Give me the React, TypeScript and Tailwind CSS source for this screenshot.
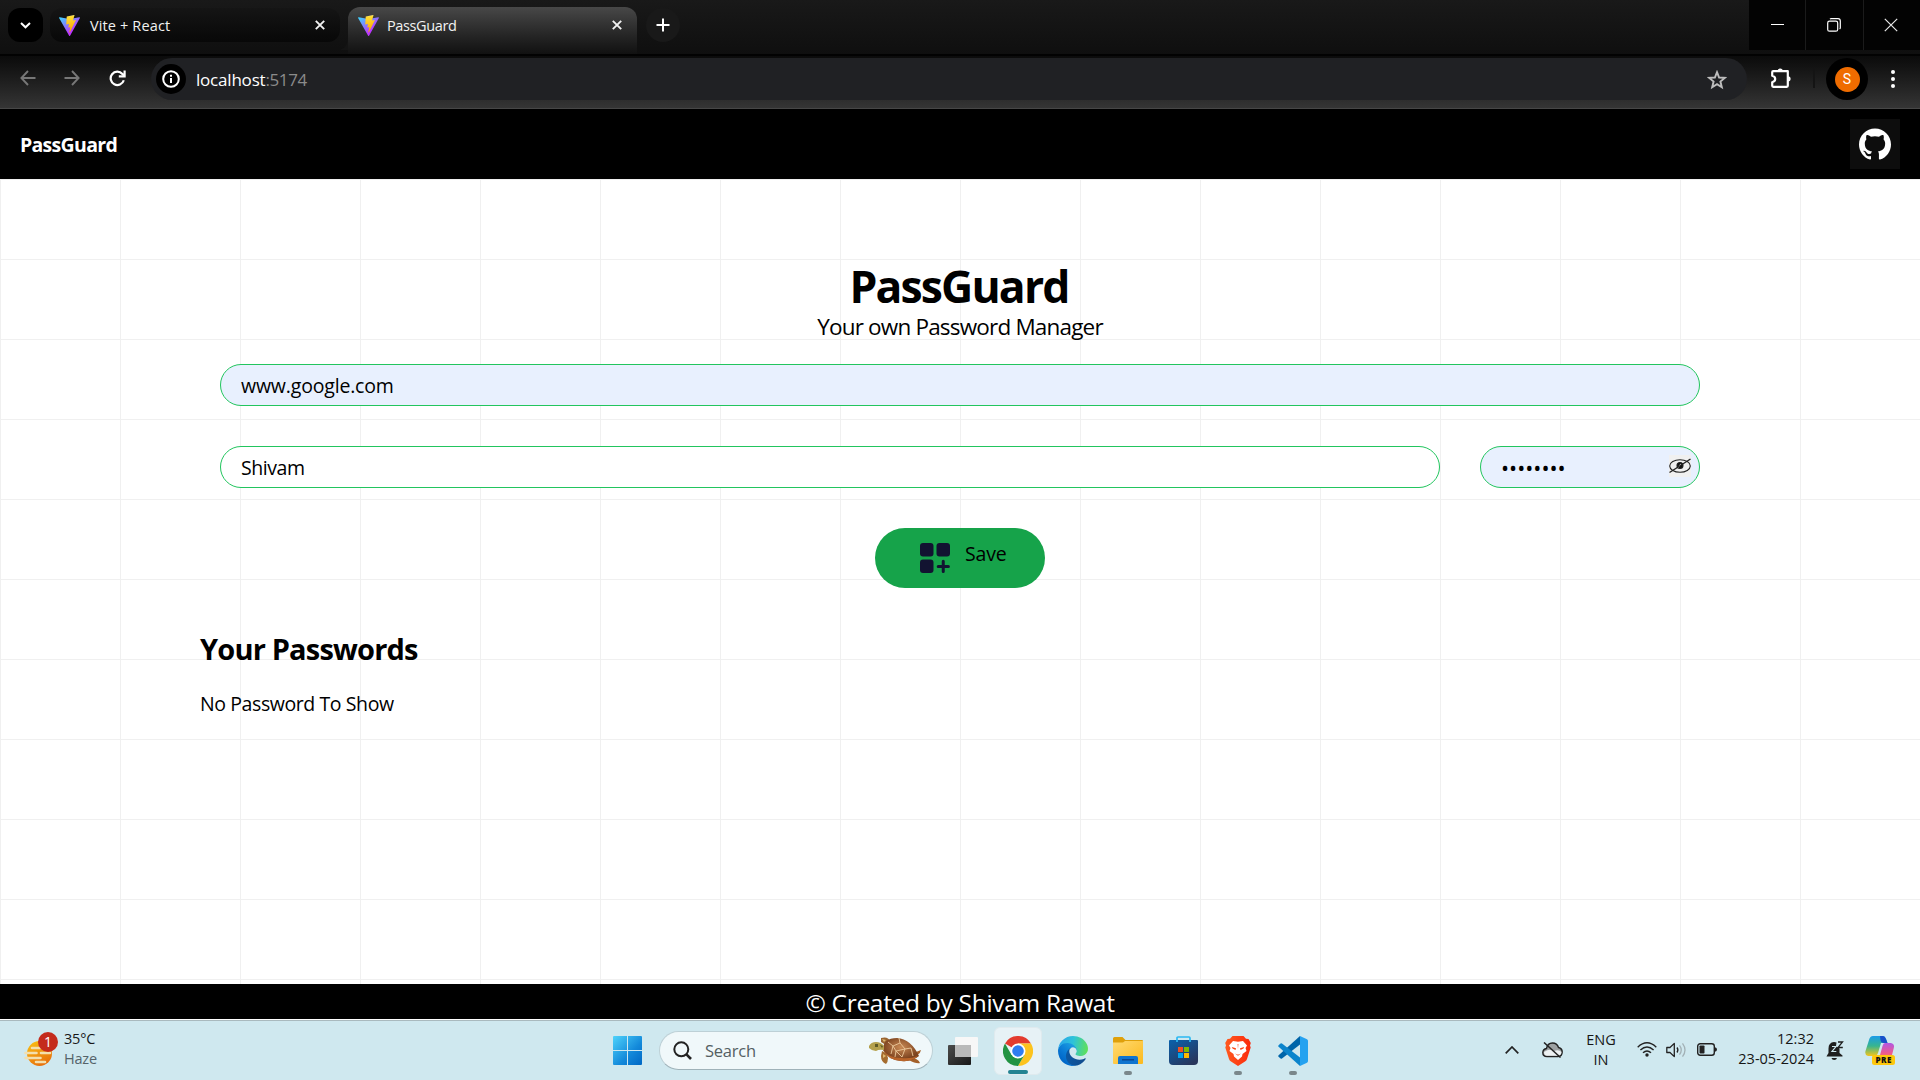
import React from "react";
import { SiGithub } from "react-icons/si";

function ViteLogo() {
  return (
    <svg width="21" height="21" viewBox="0 0 256 257" className="shrink-0">
      <defs>
        <linearGradient id="va" x1="-.8%" x2="57.6%" y1="7.7%" y2="78.4%">
          <stop offset="0%" stopColor="#41D1FF" />
          <stop offset="100%" stopColor="#BD34FE" />
        </linearGradient>
        <linearGradient id="vb" x1="43.4%" x2="50.3%" y1="2.2%" y2="89%">
          <stop offset="0%" stopColor="#FFEA83" />
          <stop offset="8.3%" stopColor="#FFDD35" />
          <stop offset="100%" stopColor="#FFA800" />
        </linearGradient>
      </defs>
      <path fill="url(#va)" d="M255.153 37.938L134.897 252.976c-2.483 4.44-8.862 4.466-11.382.048L.875 37.958c-2.746-4.814 1.371-10.646 6.827-9.67l120.385 21.517a6.537 6.537 0 0 0 2.322-.004l117.867-21.483c5.438-.991 9.574 4.796 6.877 9.62Z" />
      <path fill="url(#vb)" d="M185.432.063L96.44 17.501a3.268 3.268 0 0 0-2.634 3.014l-5.474 92.456a3.268 3.268 0 0 0 3.997 3.378l24.777-5.718c2.318-.535 4.413 1.507 3.936 3.838l-7.361 36.047c-.495 2.426 1.782 4.5 4.151 3.78l15.304-4.649c2.372-.72 4.652 1.36 4.15 3.788l-11.698 56.621c-.732 3.542 3.979 5.473 5.943 2.437l1.313-2.028l72.516-144.72c1.215-2.423-.88-5.186-3.54-4.672l-25.505 4.922c-2.396.462-4.435-1.77-3.759-4.114l16.646-57.705c.677-2.35-1.37-4.583-3.769-4.113Z" />
    </svg>
  );
}

function CloseX() {
  return (
    <svg width="10" height="10" viewBox="0 0 10 10" stroke="#f1f1f1" strokeWidth="1.9" className="shrink-0">
      <path d="M.8.8l8.4 8.4M9.2.8L.8 9.2" />
    </svg>
  );
}

function TabStrip() {
  return (
    <div className="flex h-[54px] bg-linear-to-b from-[#191919] to-[#0f0f0f] pl-2">
      <div className="mt-2 flex h-[34px] w-[35px] items-center justify-center rounded-xl bg-black">
        <svg width="11" height="7" viewBox="0 0 11 7" fill="none" stroke="#fff" strokeWidth="2">
          <path d="M1 1l4.5 4.3L10 1" />
        </svg>
      </div>
      <div className="mt-2 ml-[7px] flex h-[34px] w-[290px] items-center rounded-xl bg-linear-to-b from-[#151515] to-[#080808] pr-[15px] pl-[9px]">
        <ViteLogo />
        <span className="mt-0.5 ml-[10px] text-[14.5px] tracking-[0.13px] text-[#f2f2f2]">Vite + React</span>
        <span className="ml-auto"><CloseX /></span>
      </div>
      <div className="flex w-2 items-end">
        <svg width="8" height="14" viewBox="0 0 8 14" className="mb-1"><path d="M8 0v14H0Q8 11 8 0Z" fill="#141414" /></svg>
      </div>
      <div className="mt-[7px] flex h-[47px] w-[289px] items-start rounded-t-xl bg-linear-to-b from-[#484848] to-[#111111] pt-2 pr-[15px] pl-[10px]">
        <ViteLogo />
        <span className="mt-px ml-[8px] text-[14.5px] leading-[20px] tracking-[-0.38px] text-[#f2f2f2]">PassGuard</span>
        <span className="mt-[5px] ml-auto"><CloseX /></span>
      </div>
      <div className="mt-2 ml-[9px] flex h-[34px] w-[34px] items-center justify-center rounded-full bg-[#191919]">
        <svg width="14" height="14" viewBox="0 0 14 14" stroke="#fff" strokeWidth="2"><path d="M7 .5v13M.5 7h13" /></svg>
      </div>
      <div className="ml-auto flex h-[50px] gap-px bg-[#1b1b1b]">
        <div className="flex w-[56px] items-center justify-center bg-[#030303]">
          <svg width="13" height="2" viewBox="0 0 13 2"><path d="M0 .5h13" stroke="#fff" strokeWidth="1" /></svg>
        </div>
        <div className="flex w-[57px] items-center justify-center bg-[#030303] pr-[2px]">
          <svg width="14" height="14" viewBox="0 0 14 14" fill="none" stroke="#fff">
            <rect x=".7" y="3.2" width="10" height="10" rx="1.8" strokeWidth="1.2" />
            <path d="M3 1.2Q3.5.6 4.2.6H11Q13.3.6 13.3 3V9.8Q13.3 10.6 12.6 11.1" strokeWidth="1.2" />
          </svg>
        </div>
        <div className="flex w-[56px] items-center justify-center bg-[#030303] pr-[2px]">
          <svg width="14" height="14" viewBox="0 0 14 14" stroke="#e8e8e8" strokeWidth="1.2"><path d="M.8.8l12.4 12.4M13.2.8L.8 13.2" /></svg>
        </div>
      </div>
    </div>
  );
}

function Toolbar() {
  return (
    <div className="flex h-[55px] items-center border-t-2 border-b border-t-[#020202] border-b-[#474747] bg-linear-to-b from-[#0b0b0b] to-[#353535] pl-[20px]">
      <div className="flex -translate-y-1 items-center">
        <svg width="16" height="16" viewBox="0 0 16 16" fill="none" stroke="#777" strokeWidth="1.9"><path d="M15.5 8H1.5M8 1L1.4 8L8 15" /></svg>
        <svg width="16" height="16" viewBox="0 0 16 16" fill="none" stroke="#777" strokeWidth="1.9" className="ml-[28px]"><path d="M.5 8h14M8 1l6.6 7L8 15" /></svg>
        <svg width="17" height="17" viewBox="0 0 17 17" fill="none" stroke="#fff" strokeWidth="2.2" className="ml-[29px]">
          <path d="M14.8 10.3A6.7 6.7 0 1 1 13.4 3.9L15.5 6" /><path d="M15.6.5V6.300H9.8" />
        </svg>
      </div>
      <div className="ml-[25px] flex h-[42px] w-[1596px] -translate-y-[3px] items-center rounded-full bg-[#202124] pr-[20px] pl-[5px]">
        <div className="flex size-[30px] items-center justify-center rounded-full bg-black">
          <svg width="18" height="18" viewBox="0 0 18 18" fill="none" stroke="#fff" strokeWidth="2">
            <circle cx="9" cy="9" r="7.8" /><path d="M9 8v5M9 4.700v2" />
          </svg>
        </div>
        <span className="mt-0.5 ml-[10px] text-[17px] tracking-[-0.2px] text-white">localhost</span>
        <span className="mt-0.5 text-[17px] tracking-[-0.4px] text-[#8b8b8b]">:5174</span>
        <svg width="20" height="20" viewBox="0 0 20 20" fill="none" stroke="#bdbdbd" strokeWidth="1.9" className="mt-px ml-auto">
          <path d="M10 2.2l2.1 5.3 5.7.4-4.4 3.7 1.4 5.6L10 14.1l-4.8 3.1 1.4-5.6L2.2 7.9l5.7-.4Z" />
        </svg>
      </div>
      <svg width="22" height="22" viewBox="0 0 22 22" className="ml-[23px] -translate-y-1">
        <path d="M3.2 4.2H17.8V18.8Q17.8 19.8 16.8 19.8H3.2Q2.2 19.8 2.2 18.8V15.2Q5.2 14.4 5.2 12Q5.2 9.6 2.2 8.8V5.2Q2.2 4.2 3.2 4.2Z" fill="none" stroke="#fff" strokeWidth="2.2" strokeLinejoin="round" />
        <path d="M7.6 4a2.6 2.6 0 0 1 5.2 0ZM18 9.2a2.6 2.6 0 0 1 0 5.2Z" fill="#fff" />
      </svg>
      <div className="ml-[21px] h-5 w-[2px] -translate-y-1 bg-[#141414]" />
      <div className="ml-[11px] flex size-[42px] -translate-y-[3px] items-center justify-center rounded-full bg-black">
        <div className="flex size-[25px] items-center justify-center rounded-full bg-[#ef6c00] font-['Roboto',sans-serif] text-[14px] leading-none text-white">S</div>
      </div>
      <svg width="4" height="18" viewBox="0 0 4 18" fill="#fff" className="ml-[23px] -translate-y-[3px]"><circle cx="2" cy="2" r="2" /><circle cx="2" cy="9" r="2" /><circle cx="2" cy="16" r="2" /></svg>
    </div>
  );
}

function Page() {
  return (
    <div className="flex h-[911px] flex-col text-black">
      <nav className="flex h-[70px] shrink-0 items-center justify-between bg-black px-5">
        <div className="mt-0.5 text-[19.5px] font-bold tracking-[-0.7px] text-white">PassGuard</div>
        <div className="flex size-[50px] items-center justify-center bg-[#0d0d0d]"><SiGithub size={32} color="#fff" /></div>
      </nav>
      <main className="flex-1 bg-[linear-gradient(to_right,#f0f0f0_1px,transparent_1px),linear-gradient(to_bottom,#f0f0f0_1px,transparent_1px)] bg-[size:120px_80px] px-[200px] pt-[82px]">
        <h1 className="h-[50px] pr-[2px] text-center text-[44.5px] leading-[50px] font-bold tracking-[-1.85px]">PassGuard</h1>
        <p className="h-[32px] text-center text-[22.5px] leading-[31px] tracking-[-0.81px]">Your own Password Manager</p>
        <div className="mx-5 mt-[21px] h-[42px] rounded-full border border-[#22c55e] bg-[#e8f0fe] px-[20px] text-[19.5px] leading-[42px] tracking-[-0.18px]">www.google.com</div>
        <div className="mx-5 mt-10 flex gap-10">
          <div className="h-[42px] flex-1 rounded-full border border-[#22c55e] bg-white px-[20px] text-[19.5px] leading-[42px] tracking-[-0.45px]">Shivam</div>
          <div className="flex h-[42px] w-[220px] items-center justify-between rounded-full border border-[#22c55e] bg-[#e8f0fe] pr-[8px] pl-[20px]">
            <span className="mt-0.5 text-[21.5px] leading-[40px]">••••••••</span>
            <svg width="22" height="22" viewBox="0 0 22 22" fill="none" stroke="#222" strokeWidth="1.1" className="-mt-0.5 bg-[#f0f0f0]">
              <ellipse cx="11" cy="11" rx="10.3" ry="6.3" /><circle cx="11" cy="10.5" r="3" fill="#111" /><path d="M9 12.5l3-3.500" stroke="#f0f0f0" /><path d="M.5 17.5L21.5 4" strokeWidth="1.4" />
            </svg>
          </div>
        </div>
        <div className="mt-10 flex justify-center">
          <div className="flex h-[60px] w-[170px] items-start rounded-full bg-[#16a34a] pt-[15px] pl-[45px]">
            <svg width="30" height="30" viewBox="0 0 30 30" fill="#121331">
              <rect width="13.5" height="13.5" rx="3" /><rect x="16.5" width="13.5" height="13.5" rx="3" /><rect y="16.5" width="13.5" height="13.5" rx="3" />
              <path d="M23.25 18.3v10.2M18.2 23.400h10.2" stroke="#121331" strokeWidth="3" strokeLinecap="round" />
            </svg>
            <span className="-mt-[4px] ml-[15px] text-[19.5px] leading-[30px] tracking-[-0.15px]">Save</span>
          </div>
        </div>
        <h2 className="mt-[41px] text-[29px] leading-10 font-bold tracking-[-0.82px]">Your Passwords</h2>
        <div className="mt-[20px] text-[19.5px] leading-[30px] tracking-[-0.41px]">No Password To Show</div>
      </main>
      <footer className="h-[35px] shrink-0 bg-black text-center text-[24.5px] leading-[38px] tracking-[-0.3px] text-white">© Created by Shivam Rawat</footer>
      <div className="h-px shrink-0 bg-white" />
    </div>
  );
}

function WeatherIcon() {
  return (
    <svg width="36" height="36" viewBox="0 0 36 36" className="-mt-[4px]">
      <defs><linearGradient id="sun" x1="0" y1="0" x2="0.5" y2="1"><stop stopColor="#fbc414" /><stop offset="1" stopColor="#e8720c" /></linearGradient></defs>
      <circle cx="15.5" cy="22.5" r="12.5" fill="url(#sun)" />
      <path d="M8 17h8M1.500 22h11M17 22h9M1.500 27h15M12 31h9" stroke="#f3dfae" strokeWidth="2.6" strokeLinecap="round" />
      <circle cx="24" cy="11" r="10" fill="#c42b1c" />
      <text x="24" y="16" textAnchor="middle" fill="#fff" fontSize="14">1</text>
    </svg>
  );
}

function WindowsLogo() {
  return (
    <svg width="29" height="29" viewBox="0 0 29 29">
      <defs><linearGradient id="win" gradientUnits="userSpaceOnUse" x1="0" y1="0" x2="29" y2="29"><stop stopColor="#4fd3fb" /><stop offset=".6" stopColor="#1389da" /><stop offset="1" stopColor="#0067c4" /></linearGradient></defs>
      <g fill="url(#win)"><path d="M1 0h13v14H0V1Q0 0 1 0ZM15 0h13q1 0 1 1v13H15ZM0 15h14v14H1q-1 0-1-1ZM15 15h14v13q0 1-1 1H15Z" /></g>
    </svg>
  );
}

function Turtle() {
  return (
    <svg width="54" height="30" viewBox="0 0 54 30">
      <defs><radialGradient id="shell" cx=".5" cy=".4"><stop stopColor="#c98a55" /><stop offset="1" stopColor="#7d4420" /></radialGradient></defs>
      <path d="M13 2Q20 0 22 5L18 9L13 6Z" fill="#9a6532" />
      <path d="M14 15Q19 17 20 22Q20 26 18 28Q13 26 13 20Z" fill="#a56c30" />
      <path d="M43 20Q52 20 53 14L48 16ZM42 22Q50 22 52 27Q48 28 41 24Z" fill="#a3602a" />
      <path d="M15 14Q15 2 29 2Q43 3 51 20Q44 26 33 25Q20 24 15 14Z" fill="url(#shell)" />
      <path d="M16 15Q21 22 33 22Q43 23 50 20Q44 26 33 25Q20 24 15 14Z" fill="#b9652b" />
      <path d="M20 6L25 10L23 18M25 10L32 7L37 13L34 21M37 13L43 12M32 7L31 2M25 10L28 15L34 21M28 15L37 13M43 12L45 20M28 15L27 21" stroke="#ecc99c" strokeWidth=".9" fill="none" />
      <path d="M1 10Q3 6 8 6Q13 6 16 10L16 14Q11 13 8 15Q4 15 1 12Z" fill="#b4a04c" />
      <path d="M7 8h3v3H7zM12 9l3 1-1 2ZM3 11l3 1" fill="#5f5a24" />
      <path d="M15 18l3 2-3 2zM14 3l4 1-2 2z" fill="#e0b870" />
    </svg>
  );
}

function TaskView() {
  return (
    <svg width="30" height="28" viewBox="0 0 30 28">
      <defs><linearGradient id="tv" x1="0" y1="0" x2="1" y2="1"><stop stopColor="#4b4b4b" /><stop offset="1" stopColor="#181818" /></linearGradient></defs>
      <rect y="8" width="23" height="20" rx="1" fill="url(#tv)" /><rect x="7" width="23" height="20" rx="1" fill="#f7f7f7" /><path d="M7 8h16v12H8q-1 0-1-1Z" fill="#b9b9b9" />
    </svg>
  );
}

function ChromeIcon() {
  return (
    <svg width="30" height="30" viewBox="0 0 48 48">
      <path d="M24 24L3.2 12A24 24 0 0 1 44.8 12H24Z" fill="#e33b2e" />
      <path d="M24 12H44.8A24 24 0 0 1 24 48L34.4 30Z" fill="#fcc31e" />
      <path d="M3.2 12A24 24 0 0 0 24 48L34.4 30H24L13.6 30Z" fill="#229342" />
      <circle cx="24" cy="24" r="12" fill="#fff" /><circle cx="24" cy="24" r="9.3" fill="#2f7df0" />
    </svg>
  );
}

function EdgeIcon() {
  return (
    <svg width="30" height="30" viewBox="0 0 256 256">
      <defs>
        <linearGradient id="e1" x1="63" x2="242" y1="178" y2="178" gradientUnits="userSpaceOnUse"><stop stopColor="#0c59a4" /><stop offset="1" stopColor="#114a8b" /></linearGradient>
        <linearGradient id="e2" x1="157" x2="46" y1="100" y2="220" gradientUnits="userSpaceOnUse"><stop stopColor="#1b9de2" /><stop offset=".6" stopColor="#0a7ad5" /><stop offset="1" stopColor="#0067c8" /></linearGradient>
        <linearGradient id="e3" x1="20" x2="250" y1="70" y2="110" gradientUnits="userSpaceOnUse"><stop stopColor="#2aa9e8" /><stop offset=".45" stopColor="#2dc3d9" /><stop offset="1" stopColor="#5fe05a" /></linearGradient>
      </defs>
      <path fill="url(#e1)" d="M231 190.5c-3.4 1.8-6.9 3.4-10.5 4.7a101.7 101.7 0 0 1-35.9 6.5c-47.3 0-88.5-32.5-88.5-74.3a31.5 31.5 0 0 1 16.4-27.3c-42.8 1.8-53.8 46.4-53.8 72.5 0 74 68.1 81.4 82.8 81.4 7.9 0 19.8-2.3 27-4.6l1.3-.4a128.3 128.3 0 0 0 66.6-52.8 4 4 0 0 0-5.4-5.7Z" />
      <path fill="url(#e2)" d="M105.7 241.4a79.2 79.2 0 0 1-22.7-21.3 80.7 80.7 0 0 1 29.5-120c3.2-1.5 8.5-4.1 15.6-4a32.4 32.4 0 0 1 25.7 13 31.9 31.9 0 0 1 6.3 18.7c0-.2 24.5-79.6-80-79.6-43.9 0-80 41.7-80 78.2a130.2 130.2 0 0 0 12.1 56 128 128 0 0 0 156.4 67 75.5 75.5 0 0 1-62.8-8Z" />
      <path fill="url(#e3)" d="M152.3 148.9c-.9 1-3.4 2.5-3.4 5.6 0 2.6 1.7 5.2 4.8 7.3 14.3 10 41.4 8.6 41.5 8.6a59.6 59.6 0 0 0 30.3-8.3 61.4 61.4 0 0 0 30.4-52.9c.3-22.4-8-37.3-11.3-43.9C223.5 23.9 177.7 0 128 0A128 128 0 0 0 0 126.2c.5-36.5 36.8-66 80-66 3.5 0 23.5.3 42 10a72.600 72.600 0 0 1 30.9 29.3c6.1 10.6 7.2 24.1 7.2 29.5s-2.7 13.3-7.8 19.9Z" />
    </svg>
  );
}

function FolderIcon() {
  return (
    <svg width="30" height="27" viewBox="0 0 30 27">
      <defs><linearGradient id="fo" x1="0" y1="0" x2="1" y2="1"><stop stopColor="#ffda72" /><stop offset="1" stopColor="#fcb91c" /></linearGradient></defs>
      <path d="M0 1.5Q0 0 1.5 0H9.5L12.5 3H29Q30 3 30 4V8H0Z" fill="#dfa00a" />
      <path d="M0 5.5H10L12 4H30V26Q30 27 29 27H1Q0 27 0 26Z" fill="url(#fo)" />
      <path d="M5 27V21Q5 19 7 19H23Q25 19 25 21V27Z" fill="#0f74cf" /><path d="M9 22.8H21" stroke="#0b3f86" strokeWidth="1.3" />
    </svg>
  );
}

function StoreIcon() {
  return (
    <svg width="29" height="29" viewBox="0 0 29 29">
      <defs><linearGradient id="st" x1="0" y1="0" x2=".7" y2="1"><stop stopColor="#0a62ad" /><stop offset="1" stopColor="#28365c" /></linearGradient></defs>
      <path d="M8 6V2Q8 1 9 1H20Q21 1 21 2V6" fill="none" stroke="#2bb8f2" strokeWidth="1.7" />
      <path d="M0 5Q0 4 1 4H28Q29 4 29 5V25Q29 29 25 29H4Q0 29 0 25Z" fill="url(#st)" />
      <path d="M8 4V6M21 4V6" stroke="#2bb8f2" strokeWidth="1.7" />
      <path d="M9 11h5v5H9z" fill="#f25022" /><path d="M15 11h5v5h-5z" fill="#7fba00" /><path d="M9 17h5v5H9z" fill="#00a4ef" /><path d="M15 17h5v5h-5z" fill="#ffb900" />
    </svg>
  );
}

function BraveIcon() {
  return (
    <svg width="26" height="30" viewBox="0 0 26 30">
      <defs><linearGradient id="br"><stop stopColor="#ff5a1f" /><stop offset="1" stopColor="#fb2a0c" /></linearGradient></defs>
      <path d="M7.5 0H18.5L21 2.8L23.5 3L25.8 7L25 9.5L25.7 11.5L22 23Q21.5 24.5 20 25.5L13 30L6 25.5Q4.5 24.5 4 23L.3 11.5L1 9.5L.2 7L2.5 3L5 2.8Z" fill="url(#br)" />
      <path d="M8 5L13 5.8L18 5L22 9.5L20.5 12L21.5 15L17.5 18L17 20.5L13 24L9 20.5L8.5 18L4.5 15L5.5 12L4 9.5Z" fill="#fff" />
      <path d="M6.8 11L11 12.3L10.5 14L7.500 12.600ZM19.2 11L15 12.3L15.5 14L18.500 12.600ZM10 17.500L13 18.800L16 17.500L13 19.800ZM12.600 8h.8l-.4 5Z" fill="#fb4516" />
    </svg>
  );
}

function CodeIcon() {
  return (
    <svg width="30" height="30" viewBox="0 0 30 30">
      <path d="M22 0L22 8.5L4 22.5Q3 23 2.2 22.3L.6 20.8Q-.2 20 .6 19.2Z" fill="#0065a9" />
      <path d="M22 30L22 21.5L4 7.5Q3 7 2.2 7.7L.6 9.2Q-.2 10 .6 10.8Z" fill="#0b84cc" />
      <path d="M22 0L29 3.2Q30 3.7 30 5V25Q30 26.3 29 26.8L22 30Z" fill="#25a2f0" />
    </svg>
  );
}

function TaskApp({ children, mark, active }: { children: React.ReactNode; mark?: boolean; active?: boolean }) {
  return (
    <div className={active ? "relative flex h-12 w-12 items-center justify-center rounded-md border border-[#dfeaee] bg-[#e7f2f6]" : "relative flex h-12 w-12 items-center justify-center"}>
      {children}
      {active && <div className="absolute bottom-0 h-1 w-5 rounded-full bg-[#238392]" />}
      {mark && <div className="absolute bottom-0 h-1 w-2 rounded-full bg-[#7a878b]" />}
    </div>
  );
}

function Tray() {
  return (
    <div className="ml-auto flex items-center">
      <svg width="14" height="8" viewBox="0 0 14 8" fill="none" stroke="#222" strokeWidth="1.7" className="-mt-0.5"><path d="M.7 7.3L7 1l6.3 6.3" /></svg>
      <svg width="21" height="16" viewBox="0 0 21 16" className="-mt-0.5 ml-[23px]">
        <path d="M5 14.5Q.8 14.5.8 10.5Q1 7.2 4.5 6.5Q5.5 1 10.5 1Q15 1 16.5 5.5Q20.2 6.5 20.2 10Q20 14.5 16 14.5Z" fill="#9da1a2" stroke="#222" strokeWidth="1.4" />
        <path d="M2 10Q8 6 12 9Q17 7 19.5 10Q19 13.8 16 13.8H5Q2 13.5 2 10Z" fill="#eef2f3" />
        <path d="M2 .5L18.5 15.5" stroke="#222" strokeWidth="1.5" />
      </svg>
      <div className="-mt-0.5 ml-[22px] w-[32px] text-center text-[14.5px] leading-5 text-[#161616]"><div>ENG</div><div>IN</div></div>
      <svg width="20" height="15" viewBox="0 0 20 15" fill="none" stroke="#222" strokeWidth="1.4" className="-mt-0.5 ml-[20px]">
        <path d="M.7 5.2Q10-3.6 19.3 5.2M3.4 8Q10 1.8 16.6 8M6 10.8Q10 7 14 10.8" /><circle cx="10" cy="13" r="1.7" fill="#222" stroke="none" />
      </svg>
      <svg width="21" height="16" viewBox="0 0 21 16" fill="none" stroke="#222" strokeWidth="1.3" className="-mt-0.5 ml-[9px]">
        <path d="M.8 5.5H4L8.3 1.4V14.6L4 10.5H.8Z" strokeLinejoin="round" /><path d="M11 5.5Q12.8 8 11 10.5" /><path d="M13.5 3.3Q17 8 13.5 12.7M16.5 1.3Q21.5 8 16.5 14.7" stroke="#a3b1b6" />
      </svg>
      <svg width="20" height="13" viewBox="0 0 20 13" className="-mt-0.5 ml-[10px]"><rect x=".7" y=".7" width="16.6" height="11.6" rx="2.5" fill="none" stroke="#222" strokeWidth="1.4" /><rect x="2.5" y="2.5" width="5" height="8" rx=".8" fill="#222" /><path d="M18 4.2Q20 4.5 20 6.5T18 8.8Z" fill="#222" /></svg>
      <div className="-mt-[3px] ml-[17px] w-[80px] text-right text-[14.5px] leading-5 text-[#161616]"><div>12:32</div><div>23-05-2024</div></div>
      <svg width="18" height="20" viewBox="0 0 18 20" className="ml-[12px]">
        <path d="M1 14.5L2.5 12V7.5Q2.5 1.5 8 1Q9.5 1 10.5 1.5L10 5L13.5 7.5V12L16.5 14.5V15.5H.5ZM5.5 17H11Q10.5 19 8.2 19T5.5 17Z" fill="#1f1f1f" />
        <path d="M6 5.5h4L6 10.5h4.3" stroke="#cfe8ef" strokeWidth="1.2" fill="none" /><path d="M12 1h4.5L12 6.5h4.8" stroke="#1f1f1f" strokeWidth="1.3" fill="none" />
      </svg>
      <svg width="30" height="29" viewBox="0 0 30 29" className="ml-[21px]">
        <defs>
          <linearGradient id="c1" x1="0" y1="0" x2="0" y2="1"><stop stopColor="#1a9be8" /><stop offset=".5" stopColor="#37b58f" /><stop offset="1" stopColor="#f3c51b" /></linearGradient>
          <linearGradient id="c2" x1="0" y1="0" x2="0" y2="1"><stop stopColor="#b157e3" /><stop offset=".6" stopColor="#ee5a8f" /><stop offset="1" stopColor="#f9883d" /></linearGradient>
        </defs>
        <path d="M8 0H18Q20 0 21 3L22.5 7H16L13 17Q12 20 9 20H3Q-.5 19 .5 15L4 4Q5 0 8 0Z" fill="url(#c1)" />
        <path d="M15 0H18Q20 0 21 3L22.5 7H19Q16 7 15.5 4Z" fill="#1950c9" />
        <path d="M20 7H26Q30 8 28.8 12L27 19Q26 24 22 24H11Q14 22 15 19L17.5 10Q18.2 7 20 7Z" fill="url(#c2)" />
        <rect x="7" y="19" width="23" height="10" rx="2.5" fill="#fdc70c" />
        <text x="18.7" y="26.8" textAnchor="middle" fontSize="8" fontWeight="800" letterSpacing=".5" fill="#111">PRE</text>
      </svg>
    </div>
  );
}

function Taskbar() {
  return (
    <div className="flex h-[60px] items-center border-t border-[#a9b9be] bg-[#cfe8ef] pr-[25px] pl-[24px]">
      <div className="flex w-[589px] items-center">
        <WeatherIcon />
        <div className="-mt-[3px] ml-[4px] text-[14.5px] leading-5 tracking-[-0.2px] text-[#161616]"><div>35°C</div><div className="text-[#55636a]">Haze</div></div>
      </div>
      <WindowsLogo />
      <div className="ml-[17px] flex h-[39px] w-[274px] items-center rounded-full border border-[#bdd0d6] border-b-[#9fb2b9] bg-[#f0f8fa] pr-[10px] pl-[13px]">
        <svg width="19" height="19" viewBox="0 0 19 19" fill="none" stroke="#222" strokeWidth="2"><circle cx="8.3" cy="8.3" r="7" /><path d="M13.2 13.2L18 18" strokeWidth="2.6" /></svg>
        <span className="mt-0.5 ml-[13px] text-[16.5px] tracking-[-0.23px] text-[#555f63]">Search</span>
        <div className="ml-auto"><Turtle /></div>
      </div>
      <div className="ml-[15px]"><TaskView /></div>
      <div className="ml-4 flex gap-[7px]">
        <TaskApp active><ChromeIcon /></TaskApp>
        <TaskApp><EdgeIcon /></TaskApp>
        <TaskApp mark><FolderIcon /></TaskApp>
        <TaskApp><StoreIcon /></TaskApp>
        <TaskApp mark><BraveIcon /></TaskApp>
        <TaskApp mark><CodeIcon /></TaskApp>
      </div>
      <Tray />
    </div>
  );
}

export default function App() {
  return (
    <div className="h-[1080px] w-[1920px] overflow-hidden bg-white font-['Open_Sans','Noto_Sans',sans-serif] whitespace-nowrap">
      <TabStrip />
      <Toolbar />
      <Page />
      <Taskbar />
    </div>
  );
}
